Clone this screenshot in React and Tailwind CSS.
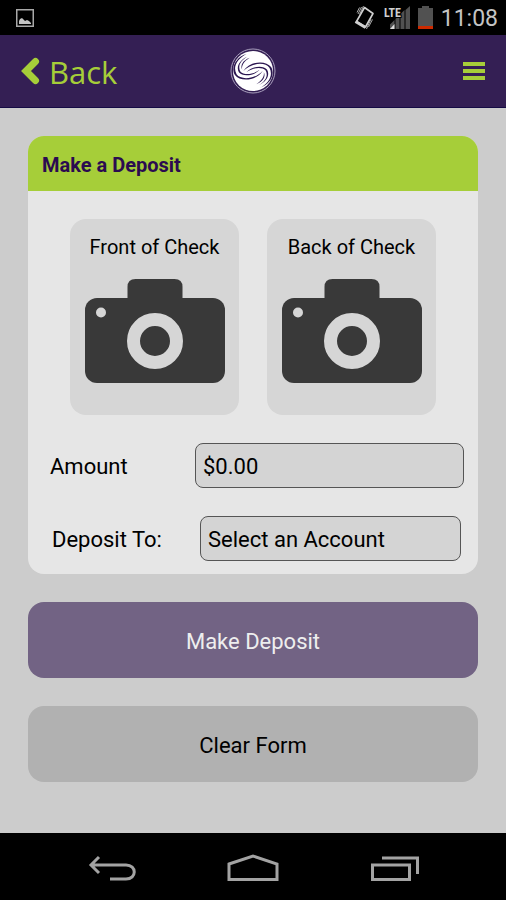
import React, { useState } from "react";

const StatusBar = () => (
  <div className="h-[35px] shrink-0 bg-black flex items-center justify-between pl-4 pr-2">
    <svg width="18" height="18" viewBox="0 0 18 18" aria-hidden="true">
      <rect x="0.75" y="0.75" width="16.5" height="16.5" fill="none" stroke="#a8a8a8" strokeWidth="1.5" />
      <path d="M3 15v-3l1-2 2-1 2 2 1 1 2-1 2 1 2 2v1z" fill="#c4c4c4" />
    </svg>
    <div className="flex items-center gap-2">
      <svg width="58" height="24" viewBox="-1 0 58 24" aria-hidden="true">
        <path d="M11.500 1.500l8.500 6-7.500 13.500-9-5.500z" fill="none" stroke="#d0d0d0" strokeWidth="1.600" strokeLinejoin="round" />
        <path d="M2.500 15.500l10 6" stroke="#d0d0d0" strokeWidth="3" />
        <path d="M8.500 1L5 8M6.500 1.500L4 6.500M19.500 13.500L15.500 21M18 13l-4.500 10M10.500 0L6.500 8.500" stroke="#aaa" strokeWidth="1" />
        <path d="M37 23v-4.500l4.500-4.500v9zM42.500 23V13l4-4v14zM47.500 23V8l4-4v19zM52.500 23V4L57 0v23z" fill="#515151" />
        <path d="M37 23l4.500-5v5z" fill="#ddd" />
        <text x="31" y="11" fill="#d0d0d0" stroke="#000" strokeWidth="2" paintOrder="stroke" fontSize="12" fontWeight="700" fontFamily="'Roboto Condensed', 'Roboto', sans-serif">LTE</text>
      </svg>
      <svg width="15" height="23" viewBox="0 0 15 23" aria-hidden="true">
        <path d="M4 0h7v2h4v18H0V2h4z" fill="#515151" />
        <path d="M0 20h15v3H0z" fill="#cc2a00" />
      </svg>
      <span className="text-[23px] leading-8 pt-[2px] text-[#c4c4c4]">11:08</span>
    </div>
  </div>
);

const swirls = [
  "M50 18C16 28 2 62 15 82C30 103 78 102 100 69C76 96 32 98 20 80C8 58 20 34 50 18z",
  "M52 27C28 38 18 58 27 74C38 88 72 86 90 66C70 82 42 83 32 72C23 58 30 40 52 27z",
  "M60 30C38 38 31 54 37 66C35 54 42 41 60 30z",
];

const Logo = () => (
  <svg width="46" height="46" viewBox="0 0 140 140" role="img" aria-label="Logo">
    <circle cx="70" cy="70" r="67" fill="none" stroke="#a9a0bd" strokeWidth="3" />
    <circle cx="70" cy="70" r="61" fill="#fff" />
    {[0, 180].map((angle) => (
      <g key={angle} transform={`rotate(${angle} 70 70)`} fill="#2b1650">
        {swirls.map((d) => (
          <path key={d} d={d} />
        ))}
      </g>
    ))}
  </svg>
);

const Header = () => (
  <header className="h-[73px] shrink-0 bg-[#341f54] border-b border-[#150b45] grid grid-cols-3 items-center px-5">
    <a href="#back" className="flex items-center gap-2 text-[#a6ce39]">
      <svg width="21" height="28" viewBox="0 0 21 28" aria-hidden="true">
        <path d="M15.500 4.500L6 14l9.500 9.500" fill="none" stroke="currentColor" strokeWidth="7" strokeLinecap="round" />
      </svg>
      <span className="text-[31px] leading-10 pt-px font-['Open_Sans',sans-serif]">Back</span>
    </a>
    <div className="flex justify-center">
      <Logo />
    </div>
    <button type="button" aria-label="Menu" className="justify-self-end">
      <svg width="23" height="20" viewBox="0 0 23 20" aria-hidden="true">
        <path d="M0 1h22v4H0zM0 8h22v4H0zM0 15h22v4H0z" fill="#a6ce39" />
      </svg>
    </button>
  </header>
);

const CheckPhoto = ({ label }) => (
  <button type="button" className="flex-1 h-[196px] pt-3 px-3 rounded-2xl bg-[#d6d6d6] flex flex-col items-center">
    <span className="text-[20px] leading-8 whitespace-nowrap">{label}</span>
    <svg viewBox="0 0 140 104" className="mt-4 w-[140px] h-[104px]" aria-hidden="true">
      <path d="M42.500 25V8q0-8 8-8h39q8 0 8 8v17z" fill="#393939" />
      <rect y="19" width="140" height="85" rx="12" fill="#393939" />
      <circle cx="16" cy="33.500" r="5" fill="#d6d6d6" />
      <circle cx="70" cy="62" r="21.500" fill="none" stroke="#d6d6d6" strokeWidth="13" />
    </svg>
  </button>
);

const App = () => {
  const [form, setForm] = useState({ amount: "$0.00", account: "" });

  const handleChange = (e) => {
    setForm({ ...form, [e.target.name]: e.target.value });
  };

  const handleSubmit = (e) => {
    e.preventDefault();
  };

  const clearForm = () => {
    setForm({ amount: "$0.00", account: "" });
  };

  return (
    <div className="min-h-screen flex flex-col bg-[#ccc] text-black font-[Roboto,sans-serif]">
      <StatusBar />
      <Header />
      <form onSubmit={handleSubmit} className="flex-1 px-7 pt-7 pb-12 flex flex-col gap-7">
        <section className="rounded-2xl overflow-hidden bg-[#e6e6e6]">
          <h1 className="h-[55px] flex items-center px-[14px] pt-[2px] bg-[#a6ce39] text-[20px] font-bold text-[#2b0b50]">
            Make a Deposit
          </h1>
          <div className="flex gap-7 px-[42px] pt-7">
            <CheckPhoto label="Front of Check" />
            <CheckPhoto label="Back of Check" />
          </div>
          <div className="flex items-center mt-7 pl-[22px] pr-[14px]">
            <label htmlFor="amount" className="w-[145px] pt-[2px] text-[22px]">Amount</label>
            <input
              id="amount"
              name="amount"
              value={form.amount}
              onChange={handleChange}
              className="flex-1 min-w-0 h-[45px] px-[7px] pt-[2px] text-[22px] bg-[#d4d4d4] border border-[#555] rounded-lg"
            />
          </div>
          <div className="flex items-center mt-7 mb-[13px] pl-6 pr-[17px]">
            <label htmlFor="account" className="w-[148px] pt-[2px] text-[22px]">Deposit To:</label>
            <select
              id="account"
              name="account"
              value={form.account}
              onChange={handleChange}
              className="appearance-none flex-1 min-w-0 h-[45px] px-[7px] pt-[2px] text-[22px] bg-[#d4d4d4] border border-[#555] rounded-lg"
            >
              <option value="">Select an Account</option>
            </select>
          </div>
        </section>
        <button type="submit" className="h-[76px] pt-[2px] rounded-2xl bg-[#726384] text-[#eee] text-[22px]">
          Make Deposit
        </button>
        <button type="button" onClick={clearForm} className="h-[76px] pt-[2px] rounded-2xl bg-[#b1b1b1] text-[22px]">
          Clear Form
        </button>
      </form>
      <nav className="h-[67px] shrink-0 bg-black flex items-center justify-center gap-[90px] text-[#a3a3a3]">
        <button type="button" aria-label="Back">
          <svg width="50" height="30" viewBox="0 0 50 30" fill="none" stroke="currentColor" strokeWidth="3" aria-hidden="true">
            <path d="M13 5L5 13l8 8M5 13h35c11 0 11 14 0 14H24" />
          </svg>
        </button>
        <button type="button" aria-label="Home">
          <svg width="54" height="30" viewBox="0 0 54 30" fill="none" stroke="currentColor" strokeWidth="3" aria-hidden="true">
            <path d="M3 12L27 4l24 8v15.500H3z" />
          </svg>
        </button>
        <button type="button" aria-label="Recent apps">
          <svg width="50" height="30" viewBox="0 0 50 30" fill="none" stroke="currentColor" strokeWidth="3" aria-hidden="true">
            <path d="M2.500 13h37v14.500h-37zM12 6h35.500v16" />
          </svg>
        </button>
      </nav>
    </div>
  );
};

export default App;
